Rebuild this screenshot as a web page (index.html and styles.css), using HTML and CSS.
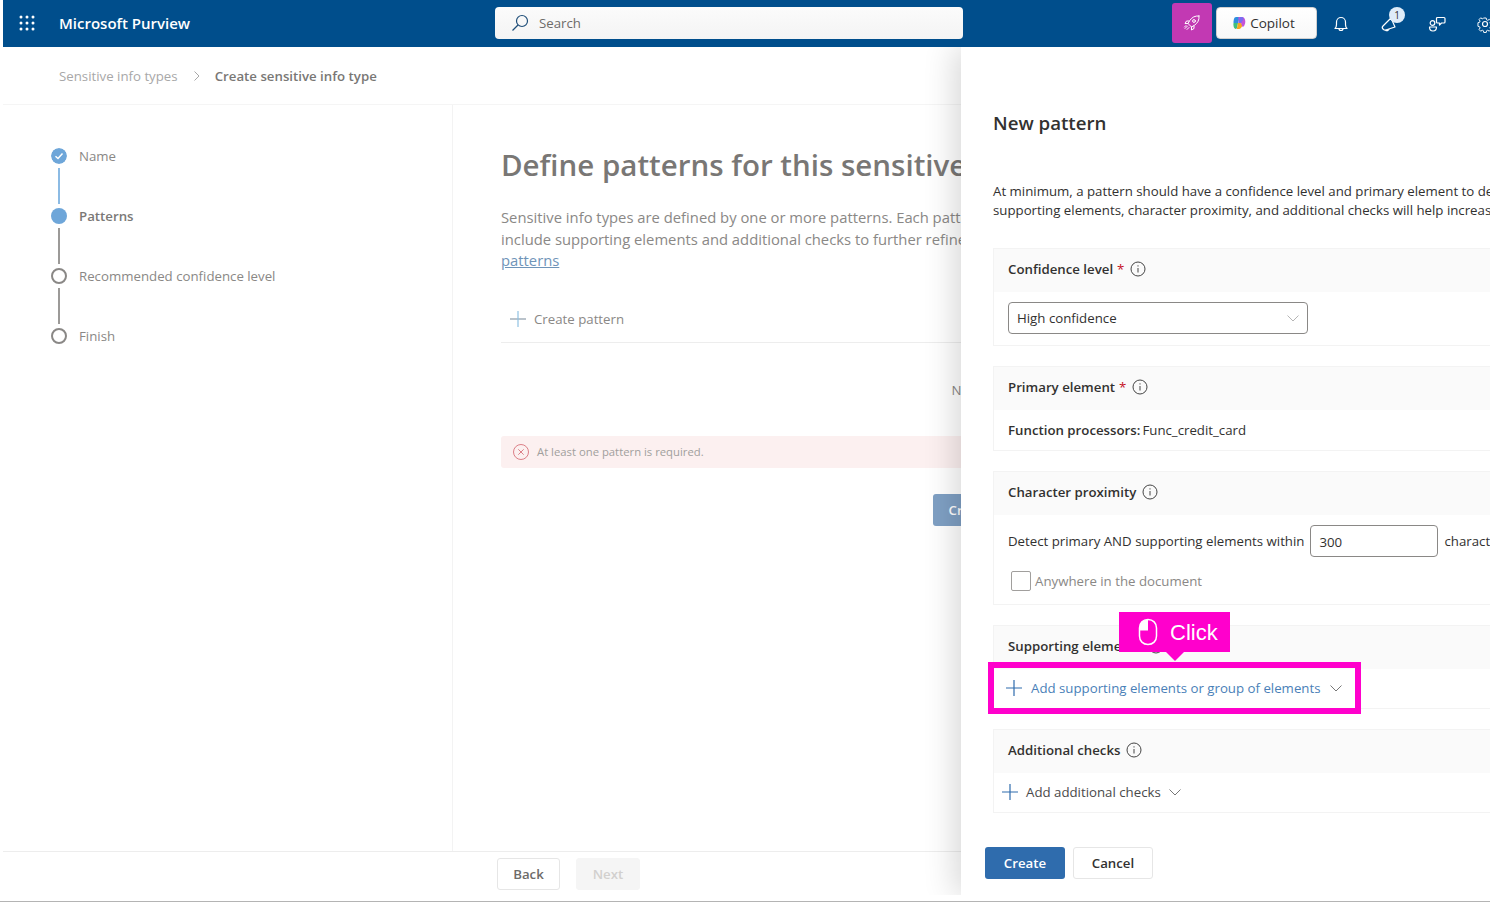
FILE: index.html
```html
<!DOCTYPE html>
<html lang="en">
<head>
    <meta charset="UTF-8">
    <title>Microsoft Purview</title>
    <link rel="stylesheet" href="styles.css">
</head>
<body>
<div class="page">
    <header class="topbar">
        <div class="brand">
            <svg class="waffle" width="16" height="16" viewBox="0 0 16 16" fill="#fff">
                <circle cx="2" cy="2" r="1.5"/><circle cx="8" cy="2" r="1.5"/><circle cx="14" cy="2" r="1.5"/>
                <circle cx="2" cy="8" r="1.5"/><circle cx="8" cy="8" r="1.5"/><circle cx="14" cy="8" r="1.5"/>
                <circle cx="2" cy="14" r="1.5"/><circle cx="8" cy="14" r="1.5"/><circle cx="14" cy="14" r="1.5"/>
            </svg>
            <span class="brand-name">Microsoft Purview</span>
        </div>
        <div class="search">
            <svg width="18" height="18" viewBox="0 0 18 18" fill="none" stroke="#1f4e79" stroke-width="1.2">
                <circle cx="11" cy="7" r="5.5"/><path d="M7 11 1.5 16.5"/>
            </svg>
            <span>Search</span>
        </div>
        <div class="rocket">
            <svg width="18" height="18" viewBox="0 0 18 18" fill="none" stroke="#fff" stroke-width="1" stroke-linejoin="round" stroke-linecap="round">
                <path d="M16 2c-4-.4-7 1.2-9.300 4.600L5 9.500l3.500 3.500 2.900-1.700C14.800 9 16.400 6 16 2z"/>
                <circle cx="11" cy="7" r="1.400"/>
                <path d="M6 7H3.500L2 9.500h3M11 12v2.500L8.500 16v-3M4.500 12 2 14.500M6 13.500 4 15.500M3 11.500 1.500 13"/>
            </svg>
        </div>
        <div class="copilot">
            <svg width="14" height="14" viewBox="0 0 14 14">
                <path d="M4 1h4L6 7H1.500C1.500 4 2 1 4 1z" fill="#2f8fe0"/>
                <path d="M1.500 7H6L5 12c-.5 1-1.500 1-2 .8C1.500 11.500 1.200 9 1.500 7z" fill="#3fbf7f"/>
                <path d="M5 12l1-5h3l1.500 2c-.5 2-2 4-3.500 4H4.500z" fill="#f5a623"/>
                <path d="M6.500 1H10c2 0 3.300 2 3.300 4.500S12 11 10.500 11L9 7h-2.500z" fill="#c454d8"/>
                <path d="M8 1h2c1 0 1.500 1 1.700 2L9 7H6.500z" fill="#7a6cf0"/>
            </svg>
            <span>Copilot</span>
        </div>
        <div class="topicon">
            <svg width="18" height="18" viewBox="0 0 18 18" fill="none" stroke="#fff" stroke-width="1.200" stroke-linejoin="round">
                <path d="M3 13.500c1-1 1.500-2 1.500-4V7a4.500 4.500 0 0 1 9 0v2.500c0 2 .5 3 1.500 4z"/>
                <path d="M7 13.500a2 2 0 0 0 4 0"/>
            </svg>
        </div>
        <div class="topicon">
            <svg width="18" height="18" viewBox="0 0 18 18" fill="none" stroke="#fff" stroke-width="1.200" stroke-linejoin="round">
                <path d="M11 3 3 11c-1 1-1 2 0 3l.5.500c1 .8 2 .8 3 .3L15 12z"/>
                <path d="M5.500 15a2 2 0 0 0 3.500-1"/>
            </svg>
            <span class="badge">1</span>
        </div>
        <div class="topicon">
            <svg width="18" height="18" viewBox="0 0 18 18" fill="none" stroke="#fff" stroke-width="1.200" stroke-linejoin="round">
                <circle cx="4.500" cy="8" r="2.300"/>
                <path d="M1.500 12h7c0 2.500-1.500 4-3.500 4s-3.500-1.500-3.500-4z"/>
                <path d="M9.500 2.500h6.500a1 1 0 0 1 1 1V7a1 1 0 0 1-1 1h-2.500l-2 2V8H9.500a1 1 0 0 1-1-1V3.500a1 1 0 0 1 1-1z"/>
            </svg>
        </div>
        <div class="topicon">
            <svg width="18" height="18" viewBox="0 0 18 18" fill="none" stroke="#fff" stroke-width="1.200" stroke-linejoin="round">
                <circle cx="9" cy="9" r="2.500"/>
                <path d="M7.500 1.500h3l.4 2.200 1.500.7 2-1.200 2 2.100-1.200 2 .6 1.500 2 .5v2.600l-2 .5-.6 1.500 1.200 2-2 2.100-2-1.200-1.500.7-.4 2.200h-3l-.4-2.200-1.500-.7-2 1.200-2-2.100 1.200-2-.6-1.500-2-.5V7.400l2-.5.6-1.500-1.200-2 2-2.100 2 1.200 1.500-.7z" transform="translate(1.800 1.800) scale(.8)"/>
            </svg>
        </div>
    </header>

    <nav class="crumbs">
        <span class="crumb">Sensitive info types</span>
        <svg class="crumb-sep" width="8" height="12" viewBox="0 0 8 12" fill="none" stroke="#a8a8a8"><path d="M1.500 1.500 6 6l-4.500 4.500"/></svg>
        <span class="crumb-current">Create sensitive info type</span>
    </nav>

    <div class="main">
        <aside class="steps">
            <div class="step">
                <svg class="dot" width="16" height="16" viewBox="0 0 16 16">
                    <circle cx="8" cy="8" r="8" fill="#6ea6d9"/>
                    <path d="M4.500 8.300 7 10.500l4.500-5" fill="none" stroke="#fff" stroke-width="1.500"/>
                </svg>
                <span>Name</span>
            </div>
            <div class="line line-done"></div>
            <div class="step step-active">
                <span class="dot dot-fill"></span>
                <span>Patterns</span>
            </div>
            <div class="line"></div>
            <div class="step">
                <span class="dot dot-open"></span>
                <span>Recommended confidence level</span>
            </div>
            <div class="line"></div>
            <div class="step">
                <span class="dot dot-open"></span>
                <span>Finish</span>
            </div>
        </aside>

        <section class="content">
            <h1>Define patterns for this sensitive info type</h1>
            <p class="lead">Sensitive info types are defined by one or more patterns. Each pattern has a confidence level and a primary element. You can<br>include supporting elements and additional checks to further refine the detection results. Learn more about<br><a href="#">patterns</a></p>
            <div class="toolbar">
                <svg width="16" height="16" viewBox="0 0 16 16" stroke-width="1.200"><path d="M0 8h16" stroke="#8b9aa8"/><path d="M8 0v16" stroke="#8fc1e3"/></svg>
                <span>Create pattern</span>
            </div>
            <div class="empty">No patterns yet</div>
            <div class="error">
                <svg width="16" height="16" viewBox="0 0 16 16" fill="none" stroke="#dc7f87">
                    <circle cx="8" cy="8" r="7.500"/><path d="M5.300 5.300l5.400 5.400M10.700 5.300l-5.400 5.400"/>
                </svg>
                <span>At least one pattern is required.</span>
            </div>
            <div class="empty-action"><span class="btn-faded">Create pattern</span></div>
        </section>
    </div>

    <footer class="wizard-foot">
        <span class="btn">Back</span>
        <span class="btn btn-off">Next</span>
    </footer>

    <aside class="panel">
        <h2>New pattern</h2>
        <p class="panel-desc">At minimum, a pattern should have a confidence level and primary element to detect sensitive information. Adding<br>supporting elements, character proximity, and additional checks will help increase the accuracy of the pattern.</p>

        <div class="sec">
            <div class="sec-head">Confidence level <em>*</em>
                <svg class="info" width="16" height="16" viewBox="0 0 16 16" fill="none" stroke="#444"><circle cx="8" cy="8" r="7"/><path d="M8 7v4.500M8 4.300v1.200"/></svg>
            </div>
            <div class="sec-body body-select">
                <div class="select">
                    <span>High confidence</span>
                    <svg width="12" height="7" viewBox="0 0 12 7" fill="none" stroke="#b5b5b5"><path d="M.5.500 6 6 11.500.500"/></svg>
                </div>
            </div>
        </div>

        <div class="sec">
            <div class="sec-head">Primary element <em>*</em>
                <svg class="info" width="16" height="16" viewBox="0 0 16 16" fill="none" stroke="#444"><circle cx="8" cy="8" r="7"/><path d="M8 7v4.500M8 4.300v1.200"/></svg>
            </div>
            <div class="sec-body body-primary">
                <strong>Function processors:</strong><span>Func_credit_card</span>
            </div>
        </div>

        <div class="sec">
            <div class="sec-head">Character proximity
                <svg class="info" width="16" height="16" viewBox="0 0 16 16" fill="none" stroke="#444"><circle cx="8" cy="8" r="7"/><path d="M8 7v4.500M8 4.300v1.200"/></svg>
            </div>
            <div class="sec-body body-prox">
                <div class="prox-row">
                    <span>Detect primary AND supporting elements within</span>
                    <span class="num-input">300</span>
                    <span>characters</span>
                </div>
                <div class="check-row">
                    <span class="checkbox"></span>
                    <span>Anywhere in the document</span>
                </div>
            </div>
        </div>

        <div class="sec">
            <div class="sec-head">Supporting elements
                <svg class="info" width="16" height="16" viewBox="0 0 16 16" fill="none" stroke="#444"><circle cx="8" cy="8" r="7"/><path d="M8 7v4.500M8 4.300v1.200"/></svg>
            </div>
            <div class="sec-body body-add body-support">
                <svg width="16" height="16" viewBox="0 0 16 16" fill="none" stroke="#2f6cad" stroke-width="1.200"><path d="M0 8h16M8 0v16"/></svg>
                <span class="add-link">Add supporting elements or group of elements</span>
                <svg width="12" height="7" viewBox="0 0 12 7" fill="none" stroke="#777"><path d="M.5.500 6 6 11.500.500"/></svg>
            </div>
        </div>

        <div class="sec">
            <div class="sec-head">Additional checks
                <svg class="info" width="16" height="16" viewBox="0 0 16 16" fill="none" stroke="#444"><circle cx="8" cy="8" r="7"/><path d="M8 7v4.500M8 4.300v1.200"/></svg>
            </div>
            <div class="sec-body body-add body-checks">
                <svg width="16" height="16" viewBox="0 0 16 16" fill="none" stroke="#2f6cad" stroke-width="1.200"><path d="M0 8h16M8 0v16"/></svg>
                <span>Add additional checks</span>
                <svg width="12" height="7" viewBox="0 0 12 7" fill="none" stroke="#777"><path d="M.5.500 6 6 11.500.500"/></svg>
            </div>
        </div>

        <div class="panel-foot">
            <span class="btn-primary">Create</span>
            <span class="btn btn-cancel">Cancel</span>
        </div>
    </aside>

    <div class="highlight"></div>
    <div class="callout">
        <svg width="20" height="28" viewBox="0 0 20 28">
            <path d="M10 1.500C5 1.500 1.500 5 1.500 10v8c0 5 3.500 8.500 8.500 8.500s8.500-3.500 8.500-8.500v-8c0-5-3.500-8.500-8.500-8.500z" fill="none" stroke="#fff" stroke-width="1.500"/>
            <path d="M10 1.500C5 1.500 1.500 5 1.500 10v2.500H10z" fill="#fff"/>
        </svg>
        <span class="callout-text">Click</span>
    </div>
</div>
</body>
</html>
```

FILE: styles.css
```css
* {
    margin: 0;
    padding: 0;
    box-sizing: border-box;
}
html, body {
    height: 100%;
    overflow: hidden;
}
body {
    background: #fff;
    font-family: "Open Sans", "Noto Sans", sans-serif;
    font-size: 13.250px;
    color: #323130;
}
.page {
    position: relative;
    width: 1490px;
    height: 902px;
    display: flex;
    flex-direction: column;
    overflow: hidden;
    border-bottom: 1px solid #b4b4b4;
    white-space: nowrap;
}

/* top bar */
.topbar {
    flex: none;
    height: 47px;
    margin-left: 3px;
    background: #004e8c;
    display: flex;
    align-items: center;
}
.brand {
    flex: none;
    width: 492px;
    display: flex;
    align-items: center;
    padding-left: 16px;
}
.waffle {
    margin-right: 24px;
    margin-top: -2px;
}
.brand-name {
    color: #fff;
    font-size: 15px;
    font-weight: 600;
    margin-top: -2px;
}
.search {
    flex: none;
    width: 468px;
    height: 32px;
    background: linear-gradient(#fbfbfb, #f4f4f4);
    border-radius: 4px;
    display: flex;
    align-items: center;
    gap: 10px;
    padding-left: 16px;
    color: #6d6b69;
    margin-top: -1px;
}
.rocket {
    flex: none;
    width: 40px;
    height: 40px;
    margin-left: 209px;
    margin-top: -1px;
    border-radius: 3px;
    background: #c239b3;
    display: flex;
    align-items: center;
    justify-content: center;
}
.copilot {
    flex: none;
    width: 101px;
    height: 32px;
    margin-left: 4px;
    margin-top: -1px;
    padding-right: 6px;
    background: linear-gradient(#fff, #f8f8f8);
    border: 1px solid #d0d0d0;
    border-radius: 4px;
    display: flex;
    align-items: center;
    justify-content: center;
    gap: 4px;
    font-size: 13.500px;
    font-weight: 500;
}
.topicon {
    position: relative;
    flex: none;
    width: 48px;
    height: 47px;
    display: flex;
    align-items: center;
    justify-content: center;
}
.badge {
    position: absolute;
    left: 24px;
    top: 7px;
    width: 16px;
    height: 16px;
    border-radius: 50%;
    background: #deecf9;
    color: #323130;
    font-size: 10px;
    line-height: 16px;
    text-align: center;
}

/* breadcrumb */
.crumbs {
    flex: none;
    height: 58px;
    margin-left: 3px;
    padding-left: 56px;
    display: flex;
    align-items: center;
    border-bottom: 1px solid #f5f5f5;
}
.crumb {
    color: #a8a8a8;
}
.crumb-sep {
    margin: 0 14px 0 15px;
}
.crumb-current {
    color: #797775;
    font-weight: 600;
}

/* wizard */
.main {
    flex: 1;
    min-height: 0;
    display: flex;
    margin-left: 3px;
}
.steps {
    flex: none;
    width: 450px;
    padding: 43px 0 0 48px;
    border-right: 1px solid #f3f3f3;
    color: #8a8886;
}
.step {
    height: 16px;
    display: flex;
    align-items: center;
    gap: 12px;
}
.step-active {
    color: #7a7876;
    font-weight: 600;
}
.dot {
    flex: none;
    width: 16px;
    height: 16px;
    border-radius: 50%;
}
.dot-fill {
    background: #6ea6d9;
}
.dot-open {
    border: 2px solid #8a8886;
}
.line {
    width: 2px;
    height: 36px;
    margin: 4px 0 4px 7px;
    background: #9c9a98;
}
.line-done {
    background: #8cbbe4;
}
.content {
    flex: 1;
    min-width: 0;
    padding: 40px 0 0 48px;
}
.content h1 {
    font-size: 29.500px;
    line-height: 40px;
    font-weight: 600;
    color: #797775;
}
.lead {
    margin-top: 22px;
    font-size: 14.800px;
    line-height: 21.500px;
    color: #8a8886;
}
.lead a {
    color: #6f94b8;
}
.toolbar {
    height: 44px;
    margin-top: 27px;
    padding: 0 0 2px 9px;
    display: flex;
    align-items: center;
    gap: 8px;
    color: #8a8886;
    border-bottom: 1px solid #ededed;
}
.empty {
    margin-top: 37px;
    padding-left: 8px;
    text-align: center;
    line-height: 20px;
    color: #8a8886;
}
.error {
    height: 32px;
    margin-top: 36px;
    padding-left: 12px;
    display: flex;
    align-items: center;
    gap: 8px;
    background: #fcf0f0;
    border-radius: 3px;
    font-size: 11.300px;
    color: #a19f9d;
}
.empty-action {
    margin-top: 26px;
    text-align: center;
}
.btn-faded {
    display: inline-block;
    width: 126px;
    height: 32px;
    line-height: 32px;
    background: #7fa0c4;
    border-radius: 3px;
    color: #fff;
    font-weight: 600;
}

/* footer */
.wizard-foot {
    flex: none;
    height: 50px;
    margin-left: 3px;
    padding: 6px 0 0 494px;
    display: flex;
    gap: 16px;
    border-top: 1px solid #ededed;
}
.btn {
    width: 63px;
    height: 32px;
    line-height: 30px;
    border: 1px solid #e6e6e6;
    border-radius: 3px;
    background: #fff;
    text-align: center;
    font-weight: 600;
    color: #6d6b69;
}
.btn-off {
    width: 64px;
    background: #f5f5f5;
    border-color: #f5f5f5;
    color: #d2d0ce;
}

/* side panel */
.panel {
    position: absolute;
    top: 47px;
    left: 961px;
    width: 529px;
    height: 848px;
    padding-top: 63px;
    background: #fff;
    box-shadow: -6px 0 30px rgba(0, 0, 0, .16);
    clip-path: inset(0 0 0 -60px);
}
.panel h2 {
    margin-left: 32px;
    font-size: 18.700px;
    line-height: 26px;
    font-weight: 600;
}
.panel-desc {
    margin: 46px 0 28px 32px;
    line-height: 19px;
}
.sec {
    width: 600px;
    margin: 0 0 20px 32px;
    border: 1px solid #f3f3f3;
    border-right: 0;
}
.sec-head {
    height: 43px;
    padding: 0 0 4px 14px;
    display: flex;
    align-items: center;
    background: #fafafa;
    font-weight: 600;
}
.sec-head em {
    margin-left: 4px;
    color: #c50f1f;
    font-style: normal;
    font-weight: 400;
}
.info {
    margin-left: 6px;
}
.sec-body {
    padding-left: 14px;
}
.body-select {
    height: 53px;
    padding-top: 10px;
}
.select {
    width: 300px;
    height: 32px;
    padding: 0 8px;
    display: flex;
    align-items: center;
    justify-content: space-between;
    border: 1px solid #8a8886;
    border-radius: 4px;
}
.body-primary {
    height: 40px;
    display: flex;
    align-items: center;
    gap: 2px;
}
.body-primary strong {
    font-weight: 600;
}
.body-prox {
    height: 89px;
    padding-top: 10px;
}
.prox-row {
    display: flex;
    align-items: center;
    gap: 6px;
}
.num-input {
    width: 128px;
    height: 32px;
    line-height: 32px;
    padding-left: 8px;
    border: 1px solid #8a8886;
    border-radius: 4px;
}
.check-row {
    margin: 14px 0 0 3px;
    display: flex;
    align-items: center;
    gap: 4px;
    color: #8a8886;
}
.checkbox {
    width: 20px;
    height: 20px;
    border: 1px solid #a19f9d;
    border-radius: 2px;
}
.body-add {
    height: 39px;
    padding-bottom: 1px;
    display: flex;
    align-items: center;
}
.body-support {
    padding-left: 12px;
    gap: 9px;
}
.add-link {
    color: #4a7fb8;
}
.body-checks {
    padding-left: 8px;
    gap: 8px;
    color: #4a4a4a;
}
.panel-foot {
    margin-top: 34px;
    padding-left: 24px;
    display: flex;
    gap: 8px;
}
.btn-primary {
    width: 80px;
    height: 32px;
    line-height: 32px;
    border-radius: 3px;
    background: #2f6cad;
    color: #fff;
    text-align: center;
    font-weight: 600;
}
.btn-cancel {
    width: 80px;
    color: #323130;
}

/* click annotation */
.highlight {
    position: absolute;
    left: 988px;
    top: 662px;
    width: 373px;
    height: 52px;
    border: 6px solid #ff00cc;
}
.callout {
    position: absolute;
    left: 1119px;
    top: 612px;
    width: 111px;
    height: 40px;
    padding-left: 19px;
    display: flex;
    align-items: center;
    gap: 12px;
    background: #ff00cc;
    color: #fff;
    font-family: "Liberation Sans", sans-serif;
    font-size: 22px;
}
.callout-text {
    margin-top: 2px;
}
.callout::after {
    content: "";
    position: absolute;
    left: 47px;
    top: 40px;
    border-left: 9px solid transparent;
    border-right: 9px solid transparent;
    border-top: 9px solid #ff00cc;
}
```
